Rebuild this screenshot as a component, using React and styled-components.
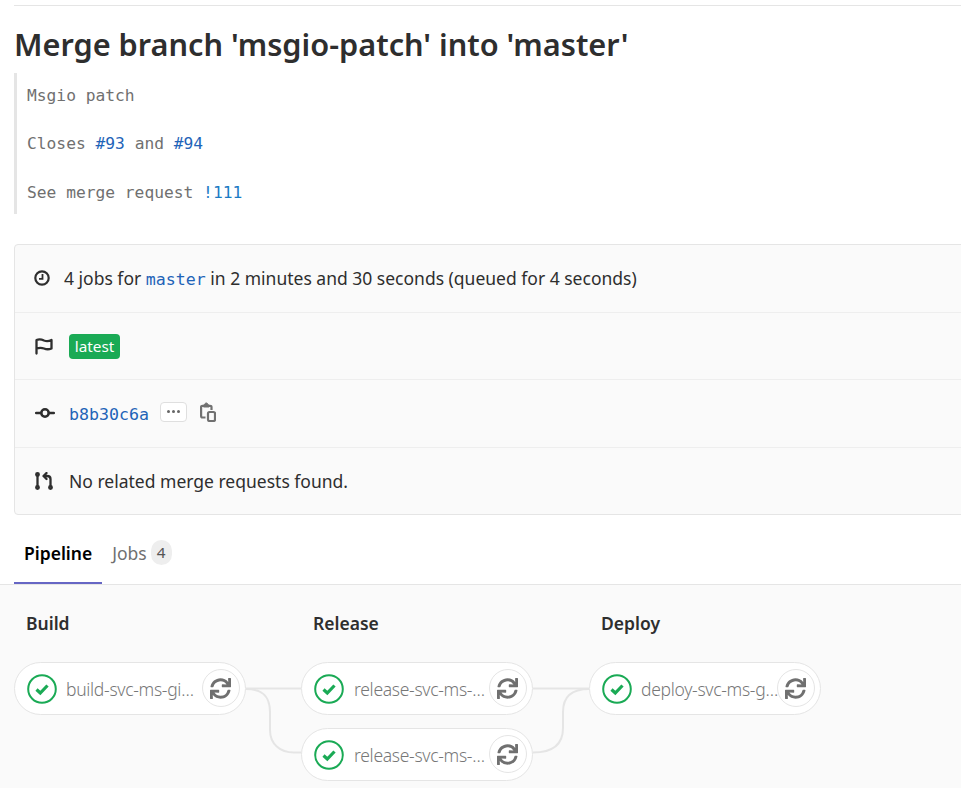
import React from "react";
import styled, { createGlobalStyle } from "styled-components";
import { FaSync } from "react-icons/fa";

const GlobalStyle = createGlobalStyle`
  html, body { margin: 0; padding: 0; background: #fff; overflow: hidden; }
  body { font-family: "Noto Sans", "Liberation Sans", sans-serif; color: #2e2e2e; }
`;

const mono = `"DejaVu Sans Mono", "Liberation Mono", monospace`;

const Page = styled.div`
  width: 961px;
  height: 788px;
  overflow: hidden;
  display: flex;
  flex-direction: column;
`;

const Top = styled.div`
  margin-left: 14px;
  padding-top: 5px;
`;

const Rule = styled.div`
  height: 1px;
  background: #e5e5e5;
`;

const Title = styled.h1`
  margin: 18px 0 0;
  font-size: 30.7px;
  line-height: 40px;
  font-weight: 600;
  color: #2e2e2e;
  white-space: nowrap;
`;

const Message = styled.pre`
  margin: 9px 0 0;
  height: 141px;
  box-sizing: border-box;
  border-left: 3px solid #e5e5e5;
  padding: 10.6px 0 0 10px;
  font-family: ${mono};
  font-size: 16.25px;
  line-height: 24.3px;
  color: #707070;
`;

const IssueLink = styled.a`
  color: ${(p) => (p.$mr ? "#1b7bc4" : "#1f64b8")};
`;

const Card = styled.div`
  margin: 30px -60px 0 0;
  background: #fafafa;
  border: 1px solid #e5e5e5;
  border-radius: 4px;
  height: 271px;
  box-sizing: border-box;
  display: flex;
  flex-direction: column;
`;

const Row = styled.div`
  flex: 1;
  display: flex;
  align-items: center;
  padding-left: 20px;
  font-size: 17.5px;
  color: #2e2e2e;
  & + & { border-top: 1px solid #eeeeee; }
`;

const IconSlot = styled.span`
  width: ${(p) => p.$w || 34}px;
  margin-left: ${(p) => p.$shift || 0}px;
  flex: none;
  display: flex;
  align-items: center;
`;

const Branch = styled.a`
  font-family: ${mono};
  font-size: 16.6px;
  color: #1f64b8;
`;

const Badge = styled.span`
  background: #1aaa55;
  color: #fff;
  border-radius: 4px;
  font-size: 15.3px;
  height: 25px;
  line-height: 25px;
  width: 51px;
  margin-top: 2px;
  text-align: center;
`;

const Sha = styled.a`
  font-family: ${mono};
  font-size: 16.6px;
  color: #1f64b8;
  margin-top: 2px;
`;

const Dots = styled.span`
  margin-left: 11px;
  margin-bottom: 3px;
  width: 27px;
  height: 20px;
  box-sizing: border-box;
  background: #fff;
  border: 1px solid #dfdfdf;
  border-radius: 4px;
  display: flex;
  align-items: center;
  justify-content: center;
  gap: 2px;
  & i {
    width: 3px;
    height: 3px;
    border-radius: 50%;
    background: #666;
  }
`;

const CopyButton = styled.span`
  margin-left: 13px;
  display: flex;
  margin-bottom: 3px;
`;

const Tabs = styled.div`
  height: 70px;
  border-bottom: 1px solid #e5e5e5;
  padding-left: 14px;
  display: flex;
  flex: none;
  box-sizing: border-box;
`;

const Tab = styled.div`
  height: 69px;
  box-sizing: border-box;
  padding: 24px 10px 0;
  font-size: 17.5px;
  line-height: 28px;
  display: flex;
  align-items: flex-start;
  gap: 4px;
  color: ${(p) => (p.$active ? "#000" : "#707070")};
  font-weight: ${(p) => (p.$active ? 600 : 400)};
  border-bottom: 2px solid ${(p) => (p.$active ? "#6666c4" : "transparent")};
  margin-bottom: -1px;
`;

const Count = styled.span`
  width: 21px;
  height: 25px;
  margin-top: 1px;
  border-radius: 11px;
  background: #eeeeee;
  color: #555;
  font-size: 15.3px;
  line-height: 25px;
  text-align: center;
`;

const Graph = styled.div`
  flex: 1;
  background: #fafafa;
  padding: 25px 0 0 13.5px;
  display: flex;
`;

const Stage = styled.div`
  width: 232px;
  flex: none;
  display: flex;
  flex-direction: column;
`;

const StageTitle = styled.div`
  padding-left: 12.5px;
  font-size: 17.5px;
  font-weight: 600;
  line-height: 26px;
  height: 52px;
  color: #2e2e2e;
`;

const JobList = styled.div`
  display: flex;
  flex-direction: column;
  gap: 13px;
`;

const Pill = styled.div`
  width: 232px;
  height: 53px;
  box-sizing: border-box;
  background: #fff;
  border: 1px solid #e5e5e5;
  border-radius: 27px;
  position: relative;
  display: flex;
  align-items: center;
  padding-left: 12.5px;
`;

const JobName = styled.span`
  margin-left: ${(p) => p.$gap}px;
  width: ${(p) => p.$w}px;
  font-size: 17.5px;
  font-weight: 300;
  letter-spacing: -0.3px;
  color: #777;
  white-space: nowrap;
  overflow: hidden;
  text-overflow: ellipsis;
`;

const Retry = styled.span`
  position: absolute;
  right: 5px;
  top: 6px;
  width: 38px;
  height: 38px;
  box-sizing: border-box;
  border-radius: 50%;
  background: #fff;
  border: 1px solid #e5e5e5;
  color: #707070;
  display: flex;
  align-items: center;
  justify-content: center;
`;

const Link = styled.svg`
  flex: none;
  width: ${(p) => p.$w}px;
  height: 120px;
  margin-top: 52px;
  fill: none;
  stroke: #e5e5e5;
  stroke-width: 2;
`;

const ClockIcon = () => (
  <svg width="16" height="16" viewBox="0 0 16 16" fill="none" stroke="#2e2e2e" strokeWidth="2.2">
    <circle cx="8" cy="8" r="6.7" />
    <path d="M8.500 4V8.800H5" strokeWidth="1.800" />
  </svg>
);

const FlagIcon = () => (
  <svg width="18" height="17" viewBox="0 0 18 17" fill="none" stroke="#2e2e2e" strokeWidth="2.300" strokeLinecap="round" strokeLinejoin="round" style={{ marginTop: 2 }}>
    <path d="M1.500 15.500V2C4.500 0.800 6.500 1.300 9 2.500C11.500 3.500 13.500 3.500 16.500 2V10.500C13.500 11.700 11.500 11.500 9 10.500C6.500 9.500 4.500 9.500 1.500 10.500" />
  </svg>
);

const CommitIcon = () => (
  <svg width="20" height="12" viewBox="0 0 20 12" fill="none" stroke="#2e2e2e" strokeWidth="2.500">
    <circle cx="10" cy="6" r="3.700" />
    <path d="M1.200 6H6M14 6H18.800" strokeLinecap="round" />
  </svg>
);

const CopyIcon = () => (
  <svg width="16" height="20" viewBox="0 0 16 20" fill="none" stroke="#707070" strokeWidth="2.200">
    <path d="M5.500 15.500H2.500C1.600 15.500 1.100 15 1.100 14V5C1.100 4.200 1.600 3.800 2.500 3.800H10C10.800 3.800 11.500 4.200 11.500 5V8" />
    <path d="M3.500 5V3H4.500C4.800 0.300 7.800 0.300 8.100 3H9.100V5Z" fill="#707070" strokeWidth="1" />
    <rect x="8" y="10" width="7" height="9" rx="1.500" />
  </svg>
);

const MergeIcon = () => (
  <svg width="18" height="18" viewBox="0 0 18 18" fill="none" stroke="#2e2e2e" strokeWidth="2.300" strokeLinecap="round" strokeLinejoin="round">
    <circle cx="2.500" cy="2.500" r="1.300" />
    <circle cx="2.500" cy="15.500" r="1.300" />
    <circle cx="15.500" cy="15.500" r="1.300" />
    <path d="M2.500 4V14M15.500 14V7C15.500 5 14 4 12 4H9M11.500 1L8.500 4L11.500 7" />
  </svg>
);

const StatusIcon = () => (
  <svg width="30" height="30" viewBox="0 0 30 30" fill="none" style={{ flex: "none" }}>
    <circle cx="15" cy="15" r="13.800" stroke="#1aaa55" strokeWidth="2" />
    <path d="M9.500 15.500L13.300 19L20.500 11.500" stroke="#1aaa55" strokeWidth="3.200" />
  </svg>
);

const Job = ({ name, width, gap = 9 }) => (
  <Pill>
    <StatusIcon />
    <JobName $w={width} $gap={gap}>{name}</JobName>
    <Retry>
      <FaSync size={21} />
    </Retry>
  </Pill>
);

export default function App() {
  return (
    <Page>
      <GlobalStyle />
      <Top>
        <Rule />
        <Title>Merge branch 'msgio-patch' into 'master'</Title>
        <Message>
          {"Msgio patch\n\nCloses "}
          <IssueLink>#93</IssueLink>
          {" and "}
          <IssueLink>#94</IssueLink>
          {"\n\nSee merge request "}
          <IssueLink $mr>!111</IssueLink>
        </Message>
        <Card>
          <Row>
            <IconSlot $w={30} $shift={-1}>
              <ClockIcon />
            </IconSlot>
            <span>
              4 jobs for <Branch>master</Branch> in 2 minutes and 30 seconds (queued for 4 seconds)
            </span>
          </Row>
          <Row>
            <IconSlot>
              <FlagIcon />
            </IconSlot>
            <Badge>latest</Badge>
          </Row>
          <Row>
            <IconSlot>
              <CommitIcon />
            </IconSlot>
            <Sha>b8b30c6a</Sha>
            <Dots>
              <i />
              <i />
              <i />
            </Dots>
            <CopyButton>
              <CopyIcon />
            </CopyButton>
          </Row>
          <Row>
            <IconSlot>
              <MergeIcon />
            </IconSlot>
            <span>No related merge requests found.</span>
          </Row>
        </Card>
      </Top>
      <Tabs>
        <Tab $active>Pipeline</Tab>
        <Tab>
          Jobs <Count>4</Count>
        </Tab>
      </Tabs>
      <Graph>
        <Stage>
          <StageTitle>Build</StageTitle>
          <JobList>
            <Job name="build-svc-ms-gitlab-ci" width={132} />
          </JobList>
        </Stage>
        <Link $w={55} viewBox="0 0 55 120">
          <path d="M0 26.500H55" />
          <path d="M0 27C14 27 24 32 24 50V68C24 82 34 90.500 48 90.500H55" />
        </Link>
        <Stage>
          <StageTitle>Release</StageTitle>
          <JobList>
            <Job name="release-svc-ms-gitlab-ci" width={134} gap={10} />
            <Job name="release-svc-ms-gitlab-ci" width={134} gap={10} />
          </JobList>
        </Stage>
        <Link $w={56} viewBox="0 0 56 120">
          <path d="M0 26.500H56" />
          <path d="M0 90.500C18 90.500 30 84 30 66V50C30 34 40 27 56 27" />
        </Link>
        <Stage>
          <StageTitle>Deploy</StageTitle>
          <JobList>
            <Job name="deploy-svc-ms-gitlab-ci" width={139} />
          </JobList>
        </Stage>
      </Graph>
    </Page>
  );
}
